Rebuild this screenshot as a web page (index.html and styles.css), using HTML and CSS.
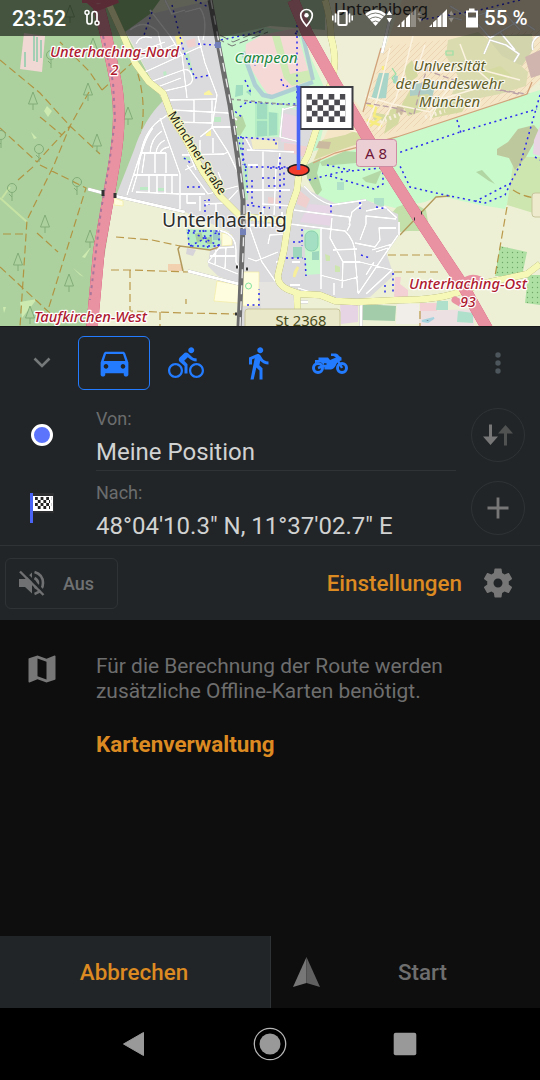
FILE: index.html
```html
<!DOCTYPE html>
<html lang="de">
<head>
    <meta charset="UTF-8">
    <meta name="viewport" content="width=device-width, initial-scale=1.0">
    <title>Navigation</title>
    <link rel="stylesheet" href="styles.css">
</head>
<body>
    <div class="phone">
        <div class="map">
            <svg class="map-canvas" viewBox="0 0 540 327" width="540" height="327">
                <defs>
                    <g id="fir" class="tree"><path d="M0 0L-4.500 12H4.500ZM0 12V18"/></g>
                    <g id="oak" class="tree"><circle cx="0" cy="5" r="4.500"/><path d="M0 9V18M0 14L-3 11"/></g>
                    <pattern id="hatch" width="6" height="6" patternUnits="userSpaceOnUse"><path d="M0 6L6 0" stroke="#e6c9a8" stroke-width=".6"/></pattern>
                    <pattern id="dots" width="5" height="5" patternUnits="userSpaceOnUse"><rect width="5" height="5" fill="#aedfa3"/><circle cx="2.500" cy="2.500" r=".7" fill="#6fa968"/></pattern>
                    <pattern id="check" width="11.200" height="11.200" patternUnits="userSpaceOnUse" x="306.300" y="94"><path d="M0 0H5.600V5.600H0ZM5.600 5.600H11.200V11.200H5.600Z" fill="#4a4a50"/></pattern>
                </defs>

                <rect width="540" height="327" fill="#eef0d5"/>

                <!-- forest -->
                <path d="M0 0H108L125 32L163 101Q142 125 134 155L124 198L114 197L93 327H0Z" fill="#add19e"/>
                <path d="M24 33L45 36L42 72L20 69Z" fill="#f0d8d5"/>
                <path d="M34 36V61M37 37V62M41 40V58M25 52V67" stroke="#a4cfb4" stroke-width="2"/>
                <path d="M47 106L52 111L48 117L44 111ZM20 302L37 299L22 318ZM3 307H6L4 313ZM31 132L37 138L34 139ZM73 268L84 277L80 275ZM82 257L91 247L85 258Z" fill="#cdebb0"/>
                <path d="M0 198L27 222M10 187L2 198" stroke="#c6e3a4" stroke-width="2"/>
                <path class="track" d="M0 60L40 93L70 126L100 154M102 90L89 71L60 42M102 90L133 62M89 92L70 126L54 165L27 220L20 327M0 128L37 162L70 126M40 165L86 188L48 310M0 267L52 315M3 234H25M37 233L58 252M134 62Q150 105 138 145L124 195M40 117L62 135M18 180L34 166"/>
                <g>
                    <use href="#fir" x="33" y="92"/><use href="#fir" x="88" y="83"/><use href="#fir" x="128" y="107"/><use href="#fir" x="97" y="134"/>
                    <use href="#fir" x="45" y="215"/><use href="#fir" x="90" y="230"/><use href="#fir" x="18" y="253"/><use href="#fir" x="69" y="274"/>
                    <use href="#fir" x="93" y="38"/><use href="#fir" x="70" y="5"/><use href="#fir" x="30" y="306"/>
                    <use href="#oak" x="51" y="50"/><use href="#oak" x="39" y="144"/><use href="#oak" x="77" y="177"/><use href="#oak" x="12" y="183"/><use href="#oak" x="1" y="130"/>
                </g>

                <!-- settlement west of the railway -->
                <path d="M125 30L150 14L212 0L239 165L243 215L241 285L218 276L208 266L210 250L230 232L185 212L116 196L134 150Q144 119 163 101Z" fill="#dbdadc"/>
                <path d="M108 0H160L150 14L125 32Z" fill="#8fba7e"/>
                <path d="M175 36L181 34L184 43L177 45ZM204 93L209 90L213 95L204 95ZM205 131L211 130V136H206Z" fill="#faf3a0"/>
                <path d="M186 41L195 38L196 46L188 48Z" fill="#f0cfcf"/>
                <path d="M188 50L194 78L192 79L184 52ZM213 117H221V122H213ZM163 72L166 71L167 76H164ZM183 157H190V160H183ZM140 187H148V190H140ZM158 188H166V191H158Z" fill="#bdeac5"/>

                <!-- Campeon and the blocks below -->
                <path d="M218 38L265 27L300 34L330 100L318 150L250 168L238 160L230 105Z" fill="#c8f7cd"/>
                <path d="M212 0H325V30L270 26L218 38Z" fill="#b4cdaa"/>
                <path d="M246 44L262 35L296 28L311 80L293 87L270 97Q256 80 245 56Z" fill="#f5d9d7"/>
                <path d="M272 36L280 36L290 74L310 70L312 80L292 86L284 78Z" fill="#cfeab4"/>
                <path d="M243 52L255 85L263 95L272 97L313 82" fill="none" stroke="#aed0d4" stroke-width="4.500" stroke-linejoin="round"/>
                <path d="M303 36L313 80" stroke="#b0ccd0" stroke-width="4"/>
                <path d="M255 103H268V112L278 113V135L255 137ZM236 85L243 85V95L235 97ZM246 92L251 88V96Z" fill="#9fdcc0"/>
                <path d="M233 118L242 115L246 126L240 136L234 134Z" fill="#b4d7a4"/>
                <path d="M240 138L282 137V108L318 112L310 156L297 187L278 280L275 327H240L243 215Z" fill="#dbdadc"/>
                <path d="M256 137V103M268 103V137M256 120H268M278 113V135" stroke="#bdf3c6" stroke-width="1.500"/>
                <path d="M283 113L300 117V142H281ZM284 143H300V153H284Z" fill="#e8d4e2"/>
                <path d="M284 143L310 147L306 158L284 150ZM268 197L278 198V204H268Z" fill="#f0cfcf"/>
                <path d="M251 139L278 141V149H253Z" fill="#f3eec4"/>
                <path d="M236 138H243V200L248 200V167L243 160Z" fill="#bdeac5"/>

                <!-- farmland south -->
                <path d="M186 229L219 230L221 244L207 250L189 247Z" fill="#b8ecc4"/>
                <path d="M195 234L201 232L204 240L197 243ZM206 238L212 236V244H207Z" fill="#a5cfa0"/>
                <path d="M213 230H220V240H213ZM244 273H250V280H244Z" fill="#9cc9c8"/>
                <path d="M222 233L232 235V245L222 246ZM217 281L239 285V303L214 301ZM243 272H259V306H243ZM114 198L123 201V206L114 205Z" fill="#fffde0" stroke="#f3eca2" stroke-width=".7"/>
                <path d="M259 282H283L296 300V327H262Z" fill="#e5e4e0"/>
                <circle cx="248.500" cy="286" r="3" fill="none" stroke="#7fe39b"/>
                <path d="M168 264H182V271H168Z" fill="#f1d1b0"/>
                <path d="M187 248L196 250L193 256L186 254Z" fill="#d6d4d8"/>
                <path class="track" d="M116 237L152 240L180 246M111 270L130 270L188 272M130 270V311L185 313L237 314M160 312V327M186 299V304"/>
                <path d="M219 247L210 250L180 246L178 249L183 271" fill="none" stroke="#b39a5c" stroke-width="1.500"/>

                <!-- university -->
                <path d="M325 0H540V80L527 93L397 137L312 163L335 115L350 86L366 78L383 46L400 0Z" fill="#f5e6c8"/>
                <path d="M325 0H402L386 46L380 54L368 100L363 112L345 88L338 70Z" fill="#eeefd6"/>
                <path d="M386 46L540 30V84L527 93L375 138L363 112Z" fill="url(#hatch)"/>
                <path d="M448 40L478 32L500 48L528 72L526 86L500 94L470 100L452 94L458 76L446 56Z" fill="#dadbae"/>
                <path d="M486 36L532 34L534 48L522 66L502 56Z" fill="#d2d4ac"/>
                <path d="M404 68L412 60L418 76L408 84ZM410 90L432 92L426 110L408 116L402 104ZM390 110L404 104L398 124L384 134ZM345 135L362 128L370 140L340 150L314 160L322 140ZM436 98L468 102L462 112L432 118ZM372 112L392 116L388 122L374 120ZM482 72L500 66L512 76L492 84Z" fill="#d5d9a2"/>
                <path d="M379 73L389 73L386 98L371 99ZM394 75L398 76L397 84L393 83Z" fill="#a9d4c8"/>
                <path d="M410 84L436 82L432 98L428 94L410 96Z" fill="#aecdc5"/>
                <path d="M446 51H453V55H446ZM392 68L396 74L392 78L396 84" fill="none" stroke="#9be0a6" stroke-width="1.200"/>
                <path d="M525 57L540 50V75L531 78Z" fill="#cfb5ae"/>
                <path d="M319 141L331 142L329 149L316 148ZM397 106L404 108L402 115L396 113Z" fill="#cbb99f"/>
                <path d="M367 104L376 108L374 116L380 118L370 126M383 66V70M367 120L382 126" fill="none" stroke="#f6ec80" stroke-width="2.500"/>
                <path d="M413 36L404 72L396 98L378 130M425 45L418 66L440 72L482 70L520 80M365 96L392 104L430 112L445 98L478 88M430 120L440 100L455 80M390 48L377 100L365 130M460 44L466 60L500 90M350 130L372 136" fill="none" stroke="#fbf2e0" stroke-width="1.500"/>
                <path d="M426 70L465 84L514 93L540 100M365 103L395 108L412 114M414 114L420 90L428 66M500 90L540 96" fill="none" stroke="#b9a0a6" stroke-width="1.300" stroke-dasharray="6 3"/>
                <path d="M425 117L445 111M380 122L400 114" stroke="#f7efdc" stroke-width="4" stroke-dasharray="2 3"/>

                <!-- park along the autobahn -->
                <path d="M305 168L320 160L397 137L527 94L540 90V172L517 180L505 209L480 205L440 196L425 202L395 208L368 201L340 205L320 198Z" fill="#c8facc"/>
                <path d="M513 165L520 157H540V215L507 205Z" fill="#cde5ae"/>
                <path d="M497 149L508 142L518 129L534 125L540 132L526 157L515 170L509 158L497 155Z" fill="#bec89d"/>
                <path d="M534 140L540 126V156L533 154Z" fill="#e8d4e2"/>
                <path d="M476 172L482 170L495 184L489 181ZM306 165L321 158L317 173L322 190L317 196L307 178Z" fill="#b1d6a3"/>
                <path d="M320 162L345 151L356 152V163L322 166ZM362 178L382 170L376 184L366 182Z" fill="#b4d9a6"/>
                <path d="M374 198H384V207H374ZM337 182H344V190H337Z" fill="#aee1c8"/>
                <path d="M397 207L412 202L426 210L428 222L424 231L408 231L400 232L390 215Z" fill="#c3dfaa"/>
                <path d="M313 163L335 153L397 137L527 94L532 82M363 112L373 76L381 48" fill="none" stroke="#d2a27a" stroke-width="1.300"/>

                <!-- settlement in the south east -->
                <path d="M300 186L338 205L364 199L398 214L399 235L386 252L392 270L395 274L370 297L340 302L300 294L279 282L290 215Z" fill="#dbdadc"/>
                <path d="M299 190L310 199L306 208L297 204Z" fill="#f0cfcf"/>
                <path d="M309 204L332 206V226L300 222Z" fill="#e6d5e4"/>
                <path d="M304 230L320 229V274L306 275Z" fill="#c8f7cd"/>
                <rect x="305" y="231" width="13" height="20" rx="6" fill="#a4dfc3" stroke="#8ad0ad"/>
                <path d="M293 247H302V258H293ZM312 252L319 251V260H312Z" fill="#9ed6bd"/>
                <path d="M325 254L330 256V261H326ZM335 265L340 267V272H335Z" fill="#cde5ae"/>
                <path d="M295 272L298 267L294 277Z" stroke="#f6ee9a" stroke-width="2.500"/>
                <path d="M395 277L401 277L400 284L408 290V297H394Z" fill="#f3d0d3"/>
                <path d="M340 303H358V322L341 324Z" fill="#e6d4e4"/>
                <path d="M363 304L396 306L395 321L362 320Z" fill="#a3ccaa"/>
                <path d="M397 304H419V324H396Z" fill="#f1eeea"/>
                <path d="M420 311L474 309V327H419Z" fill="#ece0e2"/>
                <path d="M420 303L437 303V311H420Z" fill="#f3d0d3"/>
                <path d="M437 301H448V310H436ZM458 311L473 313V323L457 322Z" fill="#aee0cb"/>
                <path d="M422 321L434 318L428 322Z" stroke="#a6d3de" stroke-width="2"/>
                <path d="M500 246L527 252L522 276L495 276Z" fill="url(#dots)"/>
                <path d="M528 275H540V305L525 303Z" fill="url(#dots)"/>
                <path class="track" d="M388 255H440M394 272H440M507 207L495 276M513 190Q525 198 540 198M420 311V327"/>
                <path d="M400 235L436 197L450 196" fill="none" stroke="#b39a5c" stroke-width="1.300"/>

                <!-- side streets -->
                <g class="streets">
                    <!-- north west -->
                    <path d="M198 36L205 63L217 95L212 127L228 152L239 175M150 10L170 36L182 55L187 98M145 72L182 55M138 60L176 44M150 82L183 70Q190 68 192 76T186 86L160 92M155 88L181 78M130 30Q145 18 158 32L162 50M136 44Q140 34 152 38M138 52L165 42M182 55L202 46M185 12L200 8Q208 20 203 40M165 0L172 14L185 10"/>
                    <path d="M170 100L217 99M173 110L228 113L237 120M194 100V122M176 122L212 123M200 137L213 127H237M212 100V122M182 155L224 154L228 152M200 140V154M213 138V153"/>
                    <!-- fan of terraces -->
                    <path d="M163 118Q146 128 141 152L127 195M153 128Q142 142 137 175L132 192M160 118L180 174V194M133 175H178M140 153H166M136 192L179 194M149 175V193M157 175V193M165 175V194M172 175V194M150 153Q151 138 162 131M156 153Q157 144 165 140M160 153Q162 148 169 147M163 118L172 112L196 170M145 153L142 173M155 153V173M166 153V173"/>
                    <!-- around Münchner Straße -->
                    <path d="M187 165L208 194L238 186M180 194H205M180 194L180 211M187 194V203H196M200 196V211M195 165L185 170M218 172L223 184M238 190L226 203L205 204M216 203V212"/>
                    <path d="M216 230Q236 232 236 250V262L240 270M208 262L219 248L234 247M208 262L238 274M216 250L215 264M226 248L225 268M210 256H236"/>
                    <!-- between railway and main road -->
                    <path d="M247 150L294 152M263 150V214M276 168L274 215M280 153L278 166M248 165H258M246 190H290M262 204L292 206M283 108L280 137L300 142M282 110L296 106L318 115M245 137L252 150M249 225H286M250 228L262 262L278 285M248 258L256 261L278 252M268 244L270 235L286 234M276 262H285"/>
                    <!-- south east -->
                    <path d="M304 186Q318 202 332 205L366 200M294 210L316 213L349 217L350 225L347 231M290 224L345 231Q355 240 355 255L358 293M332 218L330 238L343 262L342 288M349 225L352 212L362 204M355 243L375 247L380 240L379 228H396M333 250L357 249M343 262L360 262L392 270L366 294M398 235L358 294M360 240L366 224L366 216L396 219M366 211L385 207L397 218M399 222V235M321 229V289M320 275L343 281L358 277M298 288L320 295M334 283V295M290 285H300M300 262H292M372 250L392 244M376 252L388 248M366 275L374 262"/>
                    <path d="M484 54L490 40L506 45L519 54L514 62M490 38L520 20L535 30M470 18L500 8L520 30M500 32L515 50M540 35Q530 40 533 50M478 24L490 38M462 20L440 14M450 6L470 18"/>
                </g>
                <path d="M88 189L103 193M115 196L185 212M188 271L239 284M382 53L392 10M361 302V327M282 222V212M296 302L308 302" class="road-white"/>

                <!-- footpaths -->
                <path class="foot" d="M152 12L143 38M172 5L184 52L195 78L210 75M198 44L215 45M195 0L210 8L213 20M221 40L264 31M240 107L247 102L278 104L300 104M231 108L243 118M240 137L276 140V148M238 137L245 165L248 195M243 137V165M281 79L284 87L288 86M255 60V66M245 80L252 95M295 33L300 36M395 154L460 132L537 109M457 120L461 133M540 95L520 165L512 180L505 195L485 203L445 195L410 187L400 166M309 180L340 172L382 168M330 176L374 189L383 184V170M327 165L350 170M535 157L540 160M511 183L474 202M331 205V216M360 202V209M376 207L387 209M302 229V246M305 258L306 276M293 242H303M286 258H303M361 255L370 258M393 273V295M385 285V296M188 230L219 246M190 246L220 231M188 231H219V246H189ZM203 230L208 248M245 167H300M247 205L270 208M280 157V210M270 168H292M262 178H278M268 186H284V172M252 180V206M247 305H259V289M248 315H262M187 187H200M209 199V205M184 158L192 164M205 212V200M520 0L480 10L420 20M297 14V100"/>
                <path d="M216 38L232 46L268 32M220 35L233 42L264 29" fill="none" stroke="#777" stroke-width="1" stroke-dasharray="9 4"/>
                <path d="M230 99L300 106" fill="none" stroke="#999" stroke-width="1.500" stroke-dasharray="4 3"/>

                <!-- main roads -->
                <g class="road-yellow">
                    <path d="M107 0L123 35L135 63L149 82L163 93L171 114L186 140L203 172L219 195L240 216L285 221"/>
                    <path d="M325 0Q331 20 331 37Q339 65 329 88L316 130L308 155L299 172L297 190L290 210L284 250L278 275Q277 285 289 290L300 294L320 295L335 301L357 302L400 300Q440 300 462 291L485 283L527 274L540 264M297 293L298 327"/>
                </g>
                <g class="autobahn">
                    <path d="M97 0L106 35L115 78Q123 115 114 165L108 200L99 250L92 327"/>
                    <path d="M293 0L307 33L335 83L367 137L387 169L417 216L450 266L462 284L488 330"/>
                </g>
                <path d="M455 300L462 304M462 284Q470 275 480 280" fill="none" stroke="#e892a2" stroke-width="7" stroke-linecap="round"/>
                <path d="M82 0H118M89 1L97 8L118 0" fill="none" stroke="#dc6b85" stroke-width="6"/>
                <path d="M103 36L113 82L115 120L109 165L101 210L90 300" fill="none" stroke="#a9779b" stroke-width="2" stroke-dasharray="3 4"/>

                <!-- railway -->
                <path d="M210 0L218 43L230 105L238 160L243 200V225L241 280L239 327" fill="none" stroke="#6c6c6c" stroke-width="5"/>
                <path d="M211 0L219 43L231 105L239 160L244 200V225L242 280L240 327" fill="none" stroke="#e8e8e8" stroke-width="1.400" stroke-dasharray="9 7"/>
                <path d="M215 42H221V48H215ZM240 229H246V235H240Z" fill="#7480b8"/>
                <path d="M236 267H238M246 269H248M235 314H237M246 316H248M103 190V196M115 193V198M414 219H415M421 213H422" stroke="#333" stroke-width="3"/>

                <!-- labels -->
                <rect x="356.500" y="139.500" width="40" height="27" rx="3" fill="#ecced5" stroke="#ce8ca2"/>
                <rect x="245" y="309" width="95" height="24" rx="3" fill="#e9e8c8" stroke="#c8c69c"/>
                <rect x="532" y="193" width="20" height="24" rx="3" fill="#eeeace" stroke="#c8c69c"/>
                <g class="label">
                    <text class="ref-a" x="376" y="159" textLength="22" lengthAdjust="spacingAndGlyphs">A 8</text>
                    <text class="ref-st" x="301" y="326" textLength="51" lengthAdjust="spacingAndGlyphs">St 2368</text>
                    <text class="exit" x="114.500" y="57" textLength="129" lengthAdjust="spacingAndGlyphs">Unterhaching-Nord</text>
                    <text class="exit" x="114.500" y="75">2</text>
                    <text class="exit" x="90.500" y="322" textLength="113" lengthAdjust="spacingAndGlyphs">Taufkirchen-West</text>
                    <text class="exit" x="468" y="289" textLength="118" lengthAdjust="spacingAndGlyphs">Unterhaching-Ost</text>
                    <text class="exit" x="468" y="307">93</text>
                    <text class="campus" x="266" y="63" textLength="63" lengthAdjust="spacingAndGlyphs">Campeon</text>
                    <text class="uni" x="449.500" y="71" textLength="72" lengthAdjust="spacingAndGlyphs">Universität</text>
                    <text class="uni" x="449.500" y="89" textLength="108" lengthAdjust="spacingAndGlyphs">der Bundeswehr</text>
                    <text class="uni" x="449.500" y="107" textLength="61" lengthAdjust="spacingAndGlyphs">München</text>
                    <text class="town" x="224.500" y="227" textLength="125" lengthAdjust="spacingAndGlyphs">Unterhaching</text>
                    <text class="suburb" x="381" y="15" textLength="94" lengthAdjust="spacingAndGlyphs">Unterbiberg</text>
                    <text class="street" transform="translate(167.500 115) rotate(57)" textLength="96" lengthAdjust="spacingAndGlyphs">Münchner Straße</text>
                </g>

                <!-- destination flag -->
                <ellipse cx="298.500" cy="170" rx="10.500" ry="5.500" fill="#f53d2d" stroke="#1d1d1d" stroke-width="1.500"/>
                <rect x="300.500" y="87" width="52" height="42" fill="#fff" stroke="#3b3b42" stroke-width="2"/>
                <rect x="306.300" y="94" width="39.200" height="28" fill="url(#check)"/>
                <path d="M298.500 86V170" stroke="#4a64f5" stroke-width="3.600"/>
            </svg>

            <div class="status-bar">
                <span class="clock">23:52</span>
                <svg class="status-route" viewBox="0 0 18 18" width="18" height="18"><path d="M4 5V12.500A2.500 2.500 0 0 0 9 12.500V5A2.500 2.500 0 0 1 14 5V12" fill="none" stroke="#fff" stroke-width="1.700"/><circle cx="4" cy="3.500" r="2" fill="none" stroke="#fff" stroke-width="1.500"/><circle cx="14" cy="14" r="2" fill="none" stroke="#fff" stroke-width="1.500"/></svg>
                <svg class="status-icons" viewBox="296 0 184 36" width="184" height="36" fill="#fff">
                    <path d="M306.500 9.500A5.800 5.800 0 0 0 300.700 15.300C300.700 19.500 306.500 26 306.500 26S312.300 19.500 312.300 15.300A5.800 5.800 0 0 0 306.500 9.500Z" fill="none" stroke="#fff" stroke-width="1.700"/>
                    <circle cx="306.500" cy="15.300" r="2.200"/>
                    <rect x="338.300" y="11" width="8.400" height="14" rx="1" fill="none" stroke="#fff" stroke-width="2"/>
                    <path d="M335.500 13.500V22.500M332.800 15.500V20.500M349.500 13.500V22.500M352.200 15.500V20.500" stroke="#fff" stroke-width="1.600"/>
                    <path d="M375.500 26L365 14Q375.500 5.500 386 14Z"/>
                    <path d="M366.500 16.500Q375.500 9.500 384.500 16.500M369 19.500Q375.500 14.500 382 19.500M371.500 22.500Q375.500 19.500 379.500 22.500" fill="none" stroke="#57584f" stroke-width=".8"/>
                    <path d="M386.700 15L389.300 10.500L392 15ZM386.700 18L389.300 22.500L392 18Z"/>
                    <path d="M397 27L400 24V27ZM401.500 27V22.500L404.500 19.500V27ZM406 27V18L410 14V27Z"/>
                    <path d="M410.500 27V13.500L416 9V27ZM417.500 15L420 10.500L422.500 15ZM417.500 18L420 22.500L422.500 18Z" opacity=".3"/>
                    <path d="M429 27L432 24V27ZM433 27V22.500L436.500 19.500V27ZM437.500 27V18L441.500 14.500V27ZM442.500 27V13.500L447 9V27Z"/>
                    <path d="M448.700 15L451.200 10.500L453.700 15ZM448.700 18L451.200 22.500L453.700 18Z" opacity=".3"/>
                    <path d="M469 8.500H474.500V10.500H478V27.500H466V10.500H469ZM468 12.500V17.500H476V12.500Z" fill-rule="evenodd"/>
                </svg>
                <span class="battery">55 %</span>
            </div>
        </div>

        <div class="planner">
            <div class="modes">
                <div class="icon-cell"><svg viewBox="0 0 18 12" width="18" height="12"><path d="M1.500 1.500L9 9L16.500 1.500" fill="none" stroke="#76797a" stroke-width="2.600"/></svg></div>
                <div class="mode mode-active"><svg viewBox="0 0 24 24" width="37" height="37"><path d="M18.920 6.010C18.720 5.420 18.160 5 17.500 5h-11c-.66 0-1.210.42-1.420 1.010L3 12v8c0 .55.450 1 1 1h1c.55 0 1-.45 1-1v-1h12v1c0 .55.450 1 1 1h1c.55 0 1-.45 1-1v-8l-2.080-5.990zM6.500 16c-.83 0-1.500-.67-1.500-1.500S5.670 13 6.500 13s1.500.67 1.500 1.500S7.330 16 6.500 16zm11 0c-.83 0-1.500-.67-1.500-1.500s.67-1.500 1.500-1.500 1.500.67 1.500 1.500-.67 1.500-1.500 1.500zM5 11l1.500-4.500h11L19 11H5z"/></svg></div>
                <div class="mode"><svg viewBox="0 0 24 24" width="36" height="36"><path d="M15.500 5.500c1.100 0 2-.9 2-2s-.9-2-2-2-2 .9-2 2 .9 2 2 2zM5 12c-2.800 0-5 2.200-5 5s2.200 5 5 5 5-2.200 5-5-2.200-5-5-5zm0 8.500c-1.900 0-3.500-1.600-3.500-3.500s1.600-3.500 3.500-3.500 3.500 1.600 3.500 3.500-1.600 3.500-3.500 3.500zm5.800-10l2.400-2.400.8.8c1.300 1.300 3 2.100 5.100 2.100V9c-1.500 0-2.700-.6-3.600-1.500l-1.900-1.900c-.5-.4-1-.6-1.600-.6s-1.100.2-1.400.6L7.800 8.400c-.4.4-.6.9-.6 1.400 0 .6.2 1.100.6 1.400L11 14v5h2v-6.200l-2.200-2.300zM19 12c-2.800 0-5 2.200-5 5s2.200 5 5 5 5-2.200 5-5-2.200-5-5-5zm0 8.500c-1.900 0-3.500-1.600-3.500-3.500s1.600-3.500 3.500-3.500 3.500 1.600 3.500 3.500-1.600 3.500-3.500 3.500z"/></svg></div>
                <div class="mode"><svg viewBox="0 0 24 24" width="36" height="36"><path d="M13.500 5.500c1.100 0 2-.9 2-2s-.9-2-2-2-2 .9-2 2 .9 2 2 2zM9.800 8.900L7 23h2.100l1.800-8 2.100 2v6h2v-7.500l-2.100-2 .6-3C14.800 12 16.800 13 19 13v-2c-1.900 0-3.500-1-4.300-2.400l-1-1.600c-.4-.6-1-1-1.700-1-.3 0-.5.1-.8.1L6 8.300V13h2V9.600l1.800-.7"/></svg></div>
                <div class="mode"><svg viewBox="0 0 36 36" width="36" height="36"><circle cx="6" cy="23" r="4.500" fill="none" stroke="#237bff" stroke-width="3"/><circle cx="30" cy="23" r="4.500" fill="none" stroke="#237bff" stroke-width="3"/><path d="M6 23L14 20M30 23L25 14" stroke="#237bff" stroke-width="2.500"/><path d="M6.500 12.500H16L18 15L24 12.500L21.500 11H19V8.500H24Q26.500 9 27 11L29.500 12.500V15.500L27.500 16L25 18Q22 25 18.500 24.500H12.500L12 20L9 17.500Q6 16 3 18.500V15H6.500Z"/><path d="M12 19H14.500" stroke="#222527" stroke-width="1.500"/></svg></div>
                <div class="icon-cell menu"><svg viewBox="0 0 6 22" width="6" height="22" fill="#4d565c"><circle cx="3" cy="3" r="2.700"/><circle cx="3" cy="11" r="2.700"/><circle cx="3" cy="19" r="2.700"/></svg></div>
            </div>

            <div class="point">
                <div class="icon-cell"><span class="my-location"></span></div>
                <div class="point-text point-from">
                    <span class="caption">Von:</span>
                    <span class="value">Meine Position</span>
                </div>
                <button class="round"><svg viewBox="0 0 30 22" width="30" height="22"><path d="M6 .5H9V12.500H15L7.500 21L0 12.500H6Z" fill="#777"/><path d="M21 21.500H24V9.500H30L22.500 1L15 9.500H21Z" fill="#505252"/></svg></button>
            </div>
            <div class="point">
                <div class="icon-cell"><svg viewBox="0 0 24 30" width="24" height="30"><rect x="3" width="21" height="20" fill="#2d2e30"/><rect x="3" y="3" width="20" height="15" fill="#fff"/><path d="M5 5.500H22M5 11.500H22" stroke="#222" stroke-width="3" stroke-dasharray="2.800 2.800"/><path d="M7.800 8.500H20M7.800 14.500H20" stroke="#222" stroke-width="3" stroke-dasharray="2.800 2.800"/><path d="M1.500 0V30" stroke="#4a64f5" stroke-width="3"/></svg></div>
                <div class="point-text">
                    <span class="caption">Nach:</span>
                    <span class="value">48°04'10.3" N, 11°37'02.7" E</span>
                </div>
                <button class="round"><svg viewBox="0 0 22 22" width="22" height="22"><path d="M11 .5V21.500M.5 11H21.500" stroke="#777" stroke-width="2.800"/></svg></button>
            </div>

            <div class="options">
                <button class="sound">
                    <svg viewBox="0 0 26 26" width="26" height="26"><path d="M0 9H6L13 2.500V23.500L6 17H0Z" fill="#6f7172"/><path d="M15.500 2Q24 4.500 24 13T15.500 24M15.500 8Q19 10 19 13T15.500 18" fill="none" stroke="#6f7172" stroke-width="2.600"/><path d="M3 0L26 23" stroke="#222527" stroke-width="3"/><path d="M1 1.500L24.500 25" stroke="#6f7172" stroke-width="2.400"/></svg>
                    <span>Aus</span>
                </button>
                <span class="settings-link">Einstellungen</span>
                <svg class="gear" viewBox="0 0 24 24" width="36" height="36" fill="#777"><path d="M19.140 12.940c.04-.3.060-.61.060-.94 0-.32-.02-.64-.07-.94l2.030-1.580c.18-.14.230-.41.120-.61l-1.920-3.320c-.12-.22-.37-.29-.59-.22l-2.390.96c-.5-.38-1.030-.7-1.620-.94l-.36-2.540c-.04-.24-.24-.41-.48-.41h-3.840c-.24 0-.43.170-.47.410l-.36 2.540c-.59.240-1.130.570-1.620.940l-2.390-.96c-.22-.08-.47 0-.59.220L2.740 8.870c-.12.210-.08.470.120.610l2.030 1.580c-.05.300-.09.630-.09.940s.02.640.070.940l-2.030 1.580c-.18.140-.23.410-.12.610l1.920 3.320c.12.220.37.290.59.220l2.390-.96c.5.380 1.030.7 1.620.94l.36 2.540c.05.240.24.410.48.410h3.840c.24 0 .44-.17.470-.41l.36-2.540c.59-.24 1.130-.56 1.620-.94l2.390.96c.22.080.47 0 .59-.22l1.920-3.320c.12-.22.070-.47-.12-.61l-2.010-1.580zM12 15c-1.650 0-3-1.350-3-3s1.350-3 3-3 3 1.350 3 3-1.350 3-3 3z"/></svg>
            </div>
        </div>

        <div class="notice">
            <svg class="notice-icon" viewBox="0 0 24 24" width="36" height="36" fill="#777"><path d="M20.500 3l-.16.030L15 5.100 9 3 3.360 4.900c-.21.070-.36.250-.36.480V20.500c0 .28.220.5.500.5l.16-.03L9 18.900l6 2.100 5.640-1.900c.21-.07.360-.25.360-.48V3.500c0-.28-.22-.5-.5-.5zM15 19l-6-2.110V5l6 2.110V19z"/></svg>
            <div class="notice-text">
                <p>Für die Berechnung der Route werden zusätzliche Offline-Karten benötigt.</p>
                <span class="manage-link">Kartenverwaltung</span>
            </div>
        </div>

        <div class="actions">
            <button class="cancel">Abbrechen</button>
            <button class="start">
                <svg viewBox="0 0 27 30" width="27" height="30"><path d="M13.500 0L0 30L13.500 26Z" fill="#777"/><path d="M13.500 0L27 30L13.500 26Z" fill="#606060"/></svg>
                <span>Start</span>
            </button>
        </div>

        <div class="nav-bar">
            <svg viewBox="0 0 24 26" width="24" height="26"><path d="M.5 13L20.500 1.500V24.500Z" fill="#999" stroke="#999" stroke-linejoin="round"/></svg>
            <svg viewBox="0 0 34 34" width="34" height="34"><circle cx="17" cy="17" r="15.700" fill="none" stroke="#b5b5b5" stroke-width="1.300"/><circle cx="17" cy="17" r="10.500" fill="#999"/></svg>
            <svg viewBox="0 0 24 24" width="24" height="24"><rect x=".7" y=".7" width="22.600" height="22.600" rx="2" fill="#999"/></svg>
        </div>
    </div>
</body>
</html>
```
FILE: styles.css
```css
* {
    box-sizing: border-box;
}

body {
    margin: 0;
    background: #000;
    font-family: Roboto, "Liberation Sans", sans-serif;
}

button {
    padding: 0;
    border: none;
    background: none;
    font: inherit;
    color: inherit;
}

svg {
    display: block;
    flex: none;
}

.phone {
    width: 540px;
    height: 1080px;
    display: flex;
    flex-direction: column;
    overflow: hidden;
}

/* map */
.map {
    position: relative;
    height: 326px;
    overflow: hidden;
}

.tree {
    fill: none;
    stroke: #82ad78;
    stroke-width: 1;
}

.track {
    fill: none;
    stroke: #b08a32;
    stroke-width: 1.2;
    stroke-dasharray: 8 4;
    opacity: 0.85;
}

.streets {
    fill: none;
    stroke: #fff;
    stroke-width: 1.8;
    stroke-linejoin: round;
    filter: drop-shadow(0 0 0.4px #aaa);
}

.road-white {
    fill: none;
    stroke: #fff;
    stroke-width: 3;
    filter: drop-shadow(0 0 0.5px #888);
}

.foot {
    fill: none;
    stroke: #2a2af0;
    stroke-width: 1.5;
    stroke-dasharray: 2 3.5;
}

.road-yellow {
    fill: none;
    stroke: #f6f8b8;
    stroke-width: 6.5;
    stroke-linejoin: round;
    filter: drop-shadow(0 0 0.6px #84854a);
}

.autobahn {
    fill: none;
    stroke: #e892a2;
    stroke-width: 11.5;
    stroke-linejoin: round;
    filter: drop-shadow(0 0 0.7px #d02b62);
}

.label text {
    font-family: "Noto Sans", sans-serif;
    text-anchor: middle;
    stroke: rgba(255, 255, 255, 0.75);
    stroke-width: 2.5;
    paint-order: stroke;
    stroke-linejoin: round;
}

.label .exit {
    font-size: 14px;
    font-style: italic;
    font-weight: 500;
    fill: #ae1a30;
    stroke: #fff;
}

.label .campus {
    font-size: 14px;
    font-style: italic;
    fill: #19883d;
}

.label .uni {
    font-size: 14.5px;
    font-style: italic;
    fill: #5f5c28;
}

.label .town {
    font-size: 20.5px;
    fill: #2d2d2d;
}

.label .suburb {
    font-size: 17px;
    fill: #333;
    stroke: none;
}

.label .street {
    font-size: 12.5px;
    text-anchor: start;
    fill: #1b1b12;
    stroke: rgba(246, 248, 184, 0.8);
}

.label .ref-a {
    font-size: 15px;
    fill: #6d1637;
    stroke: none;
}

.label .ref-st {
    font-size: 14px;
    fill: #4c4e21;
    stroke: none;
}

/* status bar lies over the map */
.status-bar {
    position: absolute;
    top: 0;
    left: 0;
    width: 540px;
    height: 36px;
    padding-left: 12px;
    display: flex;
    align-items: center;
    background: rgba(0, 0, 0, 0.6);
    color: #fff;
    font-size: 21.3px;
    font-weight: 500;
}

.clock {
    width: 71px;
}

.status-route {
    margin-right: auto;
}

.battery {
    width: 60px;
    padding-left: 4px;
    font-size: 20.5px;
    white-space: nowrap;
}

/* route planner */
.planner {
    height: 294px;
    background: #222527;
    border-top: 1px solid #16181a;
}

.modes {
    height: 71px;
    display: flex;
    align-items: center;
}

.icon-cell {
    width: 84px;
    display: flex;
    justify-content: center;
    flex: none;
}

.modes .icon-cell:first-child {
    width: 78px;
    padding-left: 6px;
}

.menu {
    margin-left: auto;
}

.mode {
    width: 72px;
    height: 54px;
    display: flex;
    align-items: center;
    justify-content: center;
    fill: #237bff;
}

.mode-active {
    border: 1.5px solid #237bff;
    border-radius: 6px;
}

.point {
    height: 73.5px;
    display: flex;
    align-items: center;
}

.point-text {
    width: 360px;
    height: 73px;
    margin-left: 12px;
    padding-top: 9px;
    display: flex;
    flex-direction: column;
}

.point-from {
    border-bottom: 1px solid #303335;
}

.caption {
    font-size: 18px;
    line-height: 24px;
    color: #6b6d6e;
}

.value {
    margin-top: 5px;
    font-size: 24px;
    line-height: 32px;
    color: #d1d2d2;
    white-space: nowrap;
}

.my-location {
    width: 22px;
    height: 22px;
    border: 3px solid #fff;
    border-radius: 50%;
    background: #5c74fb;
}

.round {
    width: 54px;
    height: 54px;
    margin-left: 15px;
    display: flex;
    align-items: center;
    justify-content: center;
    border: 1px solid #303335;
    border-radius: 50%;
}

.options {
    height: 75px;
    padding: 0 24px 0 5px;
    display: flex;
    align-items: center;
    border-top: 1px solid #303335;
}

.sound {
    width: 113px;
    height: 51px;
    padding-left: 13px;
    display: flex;
    align-items: center;
    gap: 18px;
    border: 1px solid #303335;
    border-radius: 6px;
    font-size: 18px;
    font-weight: 500;
    color: #6f7172;
}

.settings-link {
    margin-left: auto;
    font-size: 22.4px;
    font-weight: 500;
    color: #dc8a22;
}

.gear {
    margin-left: 18px;
}

/* missing maps notice */
.notice {
    flex: 1;
    padding: 31px 24px 0;
    display: flex;
    background: #0e0e0e;
}

.notice-text {
    margin-left: 36px;
    font-size: 20.9px;
    line-height: 24.5px;
    color: #6e6e6e;
}

.notice-text p {
    width: 370px;
    margin: 3px 0 29px;
}

.manage-link {
    font-size: 22.4px;
    font-weight: 700;
    color: #dc8a22;
}

/* bottom buttons */
.actions {
    height: 72px;
    display: flex;
    background: #0e0e0e;
    font-size: 22.4px;
    font-weight: 500;
}

.cancel {
    width: 271px;
    padding-right: 2px;
    border-right: 1px solid #303335;
    background: #222527;
    color: #dc8a22;
}

.start {
    flex: 1;
    padding-left: 22px;
    display: flex;
    align-items: center;
    color: #6e6e6e;
}

.start span {
    margin-left: 78px;
}

.nav-bar {
    height: 72px;
    padding: 0 123px;
    display: flex;
    align-items: center;
    justify-content: space-between;
    background: #000;
}
```
